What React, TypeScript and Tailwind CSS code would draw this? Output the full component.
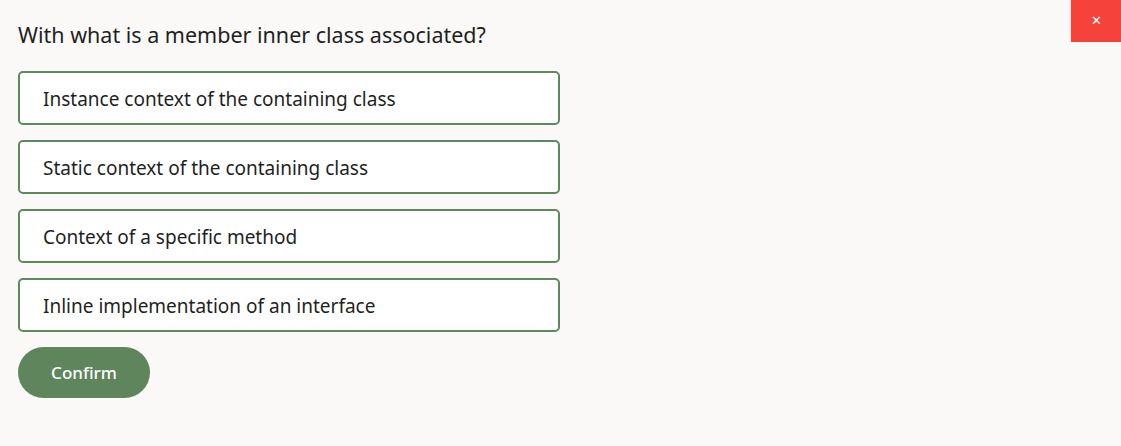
const options = [
  "Instance context of the containing class",
  "Static context of the containing class",
  "Context of a specific method",
  "Inline implementation of an interface",
];

export default function App() {
  return (
    <div className="relative w-[1121px] h-[446px] bg-[#faf9f8] font-['Noto_Sans',sans-serif] text-[#1f1f1f]">
      <button className="absolute top-0 right-0 w-[50px] h-[42px] bg-[#f5423a] text-white text-[13px] flex items-center justify-center">
        ✕
      </button>
      <div className="pt-[21px] pl-[18px] flex flex-col">
        <h1 className="text-[21.5px] leading-[28px] mb-[22px]">With what is a member inner class associated?</h1>
        <div className="flex flex-col gap-[15px]">
          {options.map((o) => (
            <div
              key={o}
              className="w-[542px] h-[54px] bg-white border-2 border-[#5d8a5b] rounded-[5px] flex items-center pl-[23px] pt-[2px] text-[19px]"
            >
              {o}
            </div>
          ))}
        </div>
        <button className="mt-[15px] w-[132px] h-[51px] rounded-full bg-[#5e855c] text-white text-[17px] font-medium">
          Confirm
        </button>
      </div>
    </div>
  );
}
